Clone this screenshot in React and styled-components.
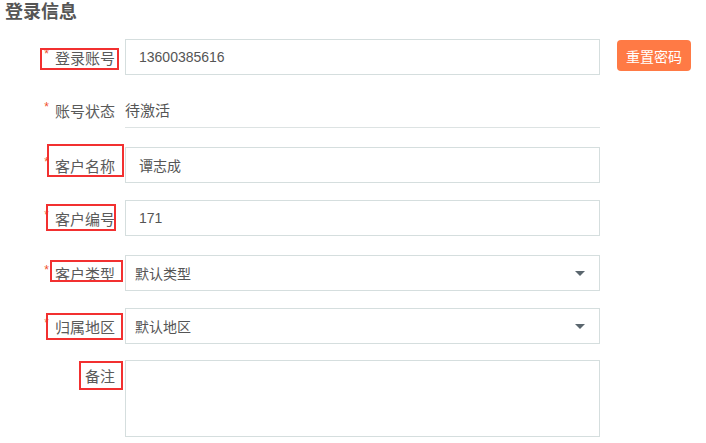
import React from 'react';
import styled, { createGlobalStyle } from 'styled-components';

const GlobalStyle = createGlobalStyle`
  body {
    margin: 0;
    background: #fff;
    font-family: "Liberation Sans", "Noto Sans CJK SC", sans-serif;
  }
`;

const Page = styled.div`
  width: 706px;
  height: 443px;
  overflow: hidden;
  color: #5a5a5a;
`;

const SectionTitle = styled.h2`
  margin: 0;
  padding-left: 5px;
  font-size: 18px;
  line-height: 24px;
  font-weight: bold;
  color: #555;
`;

const Form = styled.div`
  display: flex;
  flex-direction: column;
  gap: 18px;
  margin-top: 15px;
`;

const Row = styled.div`
  display: flex;
  align-items: flex-start;
  gap: 10px;
  margin-top: ${(p) => p.$shift || 0}px;
`;

const LabelCell = styled.div`
  position: relative;
  width: 115px;
  height: ${(p) => p.$h || 36}px;
  flex-shrink: 0;
  display: flex;
  align-items: center;
  justify-content: flex-end;
  font-size: 15px;
  color: #5a5a5a;
`;

const Star = styled.span`
  color: #f0502d;
  font-size: 12px;
  margin-right: 6px;
  align-self: center;
  transform: translateY(-3px);
`;

const Highlight = styled.span`
  position: absolute;
  left: ${(p) => p.$box[0]}px;
  top: ${(p) => p.$box[1]}px;
  width: ${(p) => p.$box[2]}px;
  height: ${(p) => p.$box[3]}px;
  border: 2px solid #f23030;
  box-sizing: border-box;
  pointer-events: none;
`;

const Field = styled.div`
  position: relative;
  width: 475px;
  height: ${(p) => p.$h || 36}px;
  box-sizing: border-box;
  border: 1px solid #d5dede;
  display: flex;
  align-items: center;
  padding-left: ${(p) => p.$pad || 13}px;
  font-size: 14px;
  color: #555;
`;

const StatusValue = styled.div`
  width: 475px;
  height: 36px;
  box-sizing: border-box;
  border-bottom: 1px solid #dde3e3;
  display: flex;
  align-items: center;
  font-size: 15px;
  color: #555;
`;

const Caret = styled.span`
  position: absolute;
  right: 14px;
  top: 50%;
  margin-top: -2px;
  width: 0;
  height: 0;
  border-left: 5px solid transparent;
  border-right: 5px solid transparent;
  border-top: 5px solid #5a666e;
`;

const ResetButton = styled.button`
  margin-left: 7px;
  margin-top: 1px;
  width: 74px;
  height: 31px;
  border: none;
  border-radius: 4px;
  background: #ff7a45;
  color: #fff;
  font-family: inherit;
  font-size: 14px;
  padding: 0;
`;

const Label = ({ text, required, box, h }) => (
  <LabelCell $h={h}>
    {required && <Star>*</Star>}
    {text}
    {box && <Highlight $box={box} />}
  </LabelCell>
);

export default function App() {
  return (
    <Page>
      <GlobalStyle />
      <SectionTitle>登录信息</SectionTitle>
      <Form>
        <Row>
          <Label text="登录账号" required box={[40, 9, 79, 22]} />
          <Field>13600385616</Field>
          <ResetButton>重置密码</ResetButton>
        </Row>
        <Row $shift={-1}>
          <Label text="账号状态" required />
          <StatusValue>待激活</StatusValue>
        </Row>
        <Row $shift={1}>
          <Label text="客户名称" required box={[47, -3, 77, 33]} />
          <Field>谭志成</Field>
        </Row>
        <Row $shift={-1}>
          <Label text="客户编号" required box={[46, 4, 70, 27]} />
          <Field>171</Field>
        </Row>
        <Row $shift={1}>
          <Label text="客户类型" required box={[50, 5, 73, 22]} />
          <Field $pad={9}>
            默认类型
            <Caret />
          </Field>
        </Row>
        <Row $shift={-1}>
          <Label text="归属地区" required box={[46, 5, 77, 27]} />
          <Field $pad={9}>
            默认地区
            <Caret />
          </Field>
        </Row>
        <Row $shift={-2}>
          <Label text="备注" h={30} box={[79, 1, 44, 29]} />
          <Field $h={77} />
        </Row>
      </Form>
    </Page>
  );
}
